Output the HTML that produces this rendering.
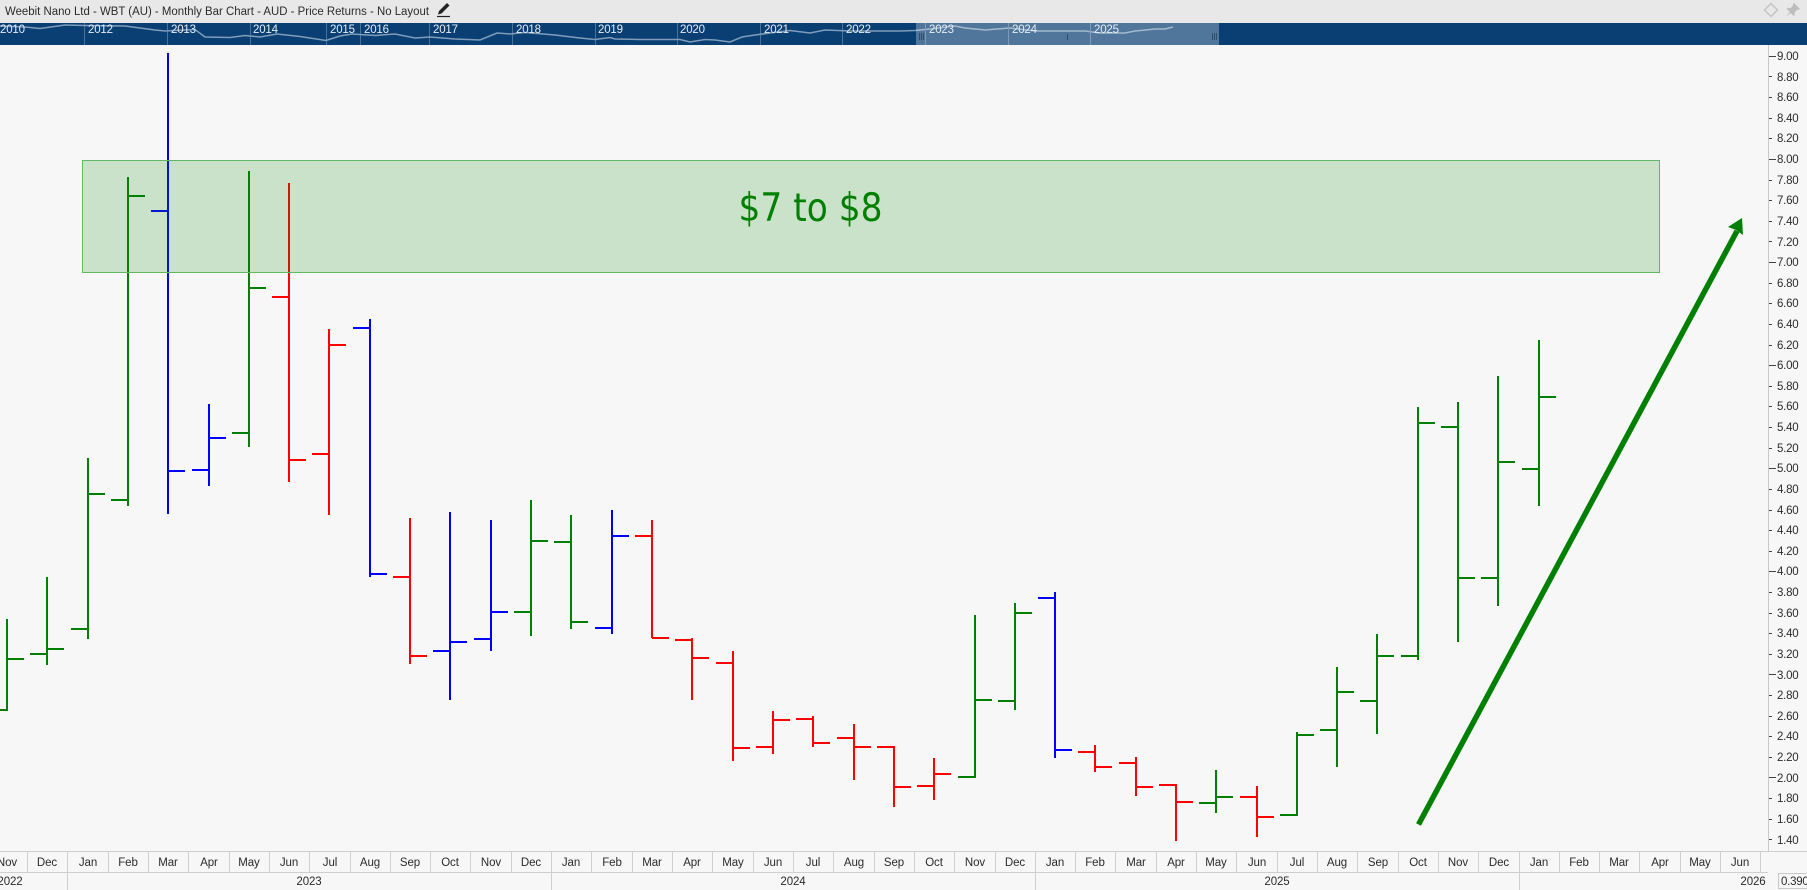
<!DOCTYPE html>
<html lang="en">
<head>
<meta charset="utf-8">
<title>Weebit Nano Ltd - WBT (AU) - Monthly Bar Chart</title>
<style>
html,body{margin:0;padding:0;width:1807px;height:890px;overflow:hidden;background:#f7f7f7}
svg{display:block;position:absolute;left:0;top:0}
text{font-family:"Liberation Sans",sans-serif}
.t{font-size:11.5px;fill:#2b2b2b}
.m{font-size:11.5px;fill:#2b2b2b;text-anchor:middle;letter-spacing:-.1px}
.b{font-size:11.5px;fill:#e4ecf3;letter-spacing:-.2px}
.a{font-size:11.5px;fill:#2b2b2b;letter-spacing:-.25px}
</style>
</head>
<body>
<svg width="1807" height="890" viewBox="0 0 1807 890" xmlns="http://www.w3.org/2000/svg">
<rect x="0" y="0" width="1807" height="890" fill="#f7f7f7"/>
<!-- title bar -->
<rect x="0" y="0" width="1807" height="23" fill="#e8e8e8"/>
<text class="t" x="5" y="15" textLength="424" lengthAdjust="spacingAndGlyphs">Weebit Nano Ltd - WBT (AU) - Monthly Bar Chart - AUD - Price Returns - No Layout</text>
<!-- pencil -->
<path d="M438 14.500l1-3.500 8-8 2.500 2.500-8 8z" fill="#222"/>
<path d="M437 16.500h13" stroke="#222" stroke-width="1.200" fill="none"/>
<!-- diamond + pin -->
<path d="M1771 3.500l6.500 6.500-6.500 6.500-6.500-6.500z" fill="none" stroke="#c4c4c4" stroke-width="1.500"/>
<path d="M1794 3l6 6-1.500 1-1-.5-3 3 .5 2.500-1.200 1-3-3-4.500 3.500 3.500-4.500-3-3 1-1.200 2.500.5 3-3-.5-1z" fill="#bdbdbd"/>
<!-- navigator -->
<rect x="0" y="23" width="1807" height="22" fill="#0a3f73"/>
<g stroke="#4d7299" stroke-width="1" shape-rendering="crispEdges">
<path d="M84.500 23V45M167.500 23V45M250.500 23V45M326.500 23V45M360.500 23V45M429.500 23V45M512.500 23V45M595.500 23V45M677.500 23V45M760.500 23V45M842.500 23V45"/>
</g>
<polyline fill="none" stroke="#7f9dba" stroke-width="1.500" points="0,26 25,27 40,28.500 65,25 85,25.500 125,26 155,30 165,31 185,30 195,29.500 205,37 230,37.500 245,35.500 260,37 277,34 300,36.500 326,40.500 340,36 352,34 375,35.500 395,34 415,38 430,37 455,39 480,40 497,33 510,34 525,32.500 555,35 580,38 595,39.500 610,37.500 615,39 640,39.500 680,39.500 690,42 705,39.500 715,40 730,42 742,37 755,35 770,33 790,30.500 810,33 825,30 850,31 870,31 900,31 915,30.500 930,29 955,26 965,28 985,30 1010,28 1035,31 1050,31 1065,31 1085,31 1100,33 1125,33 1135,31 1155,29 1165,29 1173,27"/>
<text class="b" x="0" y="33">2010</text>
<text class="b" x="88" y="33">2012</text>
<text class="b" x="171" y="33">2013</text>
<text class="b" x="253" y="33">2014</text>
<text class="b" x="330" y="33">2015</text>
<text class="b" x="364" y="33">2016</text>
<text class="b" x="433" y="33">2017</text>
<text class="b" x="516" y="33">2018</text>
<text class="b" x="598" y="33">2019</text>
<text class="b" x="680" y="33">2020</text>
<text class="b" x="764" y="33">2021</text>
<text class="b" x="846" y="33">2022</text>
<rect x="916" y="23" width="303" height="22" fill="#ffffff" fill-opacity=".29"/>
<g stroke="#7e9ab6" stroke-width="1" shape-rendering="crispEdges"><path d="M925.500 23V45M1008.500 23V45M1090.500 23V45"/></g>
<text class="b" x="929" y="33">2023</text>
<text class="b" x="1012" y="33">2024</text>
<text class="b" x="1094" y="33">2025</text>
<g stroke="#2f4f6f" stroke-width="1" shape-rendering="crispEdges"><path d="M919.500 33V40M921.500 33V40M923.500 33V40M1212.500 33V40M1214.500 33V40M1216.500 33V40M1067.500 34V40"/></g>

<!-- bars -->
<g fill="none" stroke-width="2" shape-rendering="crispEdges">
<path stroke="#008000" d="
M7 619V711M-10 710H7M7 659H24
M47 577V665M30 654H47M47 649H64
M88 458V639M71 629H88M88 494H105
M128 177V506M111 500H128M128 196H145
M249 171V447M232 433H249M249 288H266
M531 500V636M514 612H531M531 541H548
M571 515V629M554 542H571M571 622H588
M975 615V778M958 777H975M975 700H992
M1015 603V710M998 701H1015M1015 613H1032
M1216 770V813M1199 803H1216M1216 797H1233
M1297 732V816M1280 815H1297M1297 735H1314
M1337 667V767M1320 730H1337M1337 692H1354
M1377 634V734M1360 701H1377M1377 656H1394
M1418 407V660M1401 656H1418M1418 423H1435
M1458 402V642M1441 427H1458M1458 578H1475
M1498 376V606M1481 578H1498M1498 462H1515
M1539 340V506M1522 469H1539M1539 397H1556"/>
<path stroke="#0000ff" d="
M168 53V514M151 211H168M168 471H185
M209 404V486M192 470H209M209 438H226
M370 319V577M353 328H370M370 574H387
M450 512V700M433 651H450M450 642H467
M491 520V651M474 639H491M491 612H508
M612 510V634M595 628H612M612 536H629
M1055 592V758M1038 598H1055M1055 750H1072"/>
<path stroke="#ff0000" d="
M289 183V482M272 297H289M289 460H306
M329 329V515M312 454H329M329 345H346
M410 518V664M393 577H410M410 656H427
M652 520V638M635 536H652M652 638H669
M692 638V700M675 640H692M692 658H709
M733 651V761M716 663H733M733 748H750
M773 711V754M756 747H773M773 720H790
M813 716V747M796 719H813M813 743H830
M854 724V780M837 738H854M854 747H871
M894 746V807M877 747H894M894 787H911
M934 758V800M917 786H934M934 774H951
M1095 745V772M1078 752H1095M1095 767H1112
M1136 757V796M1119 763H1136M1136 787H1153
M1176 784V841M1159 785H1176M1176 802H1193
M1257 786V837M1240 797H1257M1257 817H1274"/>
</g>

<!-- zone -->
<rect x="82.500" y="160.500" width="1577" height="112" fill="#008000" fill-opacity=".18" stroke="#62b862" stroke-width="1" shape-rendering="crispEdges"/>
<text x="810.500" y="221" text-anchor="middle" font-size="39" style="font-family:'DejaVu Sans','Liberation Sans',sans-serif" fill="#008000" textLength="144" lengthAdjust="spacingAndGlyphs">$7 to $8</text>

<!-- arrow -->
<path d="M1418.500 824.500L1737 231" stroke="#008000" stroke-width="5.500" fill="none"/>
<path d="M1742 218L1743 235L1736 230L1728 227z" fill="#008000"/>

<!-- price axis -->
<path d="M1768.500 45V852" stroke="#c8c8c8" stroke-width="1" shape-rendering="crispEdges"/>
<g stroke="#444" stroke-width="1" shape-rendering="crispEdges" fill="none">
<path d="M1769 56.500H1776M1769 159.500H1776M1769 262.500H1776M1769 365.500H1776M1769 468.500H1776M1769 571.500H1776M1769 674.500H1776M1769 777.500H1776"/>
<path d="M1769 76.500h3M1769 97.500h3M1769 118.500h3M1769 138.500h3M1769 180.500h3M1769 200.500h3M1769 221.500h3M1769 241.500h3M1769 283.500h3M1769 303.500h3M1769 324.500h3M1769 345.500h3M1769 386.500h3M1769 406.500h3M1769 427.500h3M1769 448.500h3M1769 489.500h3M1769 510.500h3M1769 530.500h3M1769 551.500h3M1769 592.500h3M1769 613.500h3M1769 633.500h3M1769 654.500h3M1769 695.500h3M1769 716.500h3M1769 736.500h3M1769 757.500h3M1769 798.500h3M1769 819.500h3M1769 839.500h3"/>
</g>
<g class="a">
<text class="a" x="1777" y="60">9.00</text>
<text class="a" x="1777" y="81">8.80</text>
<text class="a" x="1777" y="101">8.60</text>
<text class="a" x="1777" y="122">8.40</text>
<text class="a" x="1777" y="142">8.20</text>
<text class="a" x="1777" y="163">8.00</text>
<text class="a" x="1777" y="184">7.80</text>
<text class="a" x="1777" y="204">7.60</text>
<text class="a" x="1777" y="225">7.40</text>
<text class="a" x="1777" y="246">7.20</text>
<text class="a" x="1777" y="266">7.00</text>
<text class="a" x="1777" y="287">6.80</text>
<text class="a" x="1777" y="307">6.60</text>
<text class="a" x="1777" y="328">6.40</text>
<text class="a" x="1777" y="349">6.20</text>
<text class="a" x="1777" y="369">6.00</text>
<text class="a" x="1777" y="390">5.80</text>
<text class="a" x="1777" y="410">5.60</text>
<text class="a" x="1777" y="431">5.40</text>
<text class="a" x="1777" y="452">5.20</text>
<text class="a" x="1777" y="472">5.00</text>
<text class="a" x="1777" y="493">4.80</text>
<text class="a" x="1777" y="514">4.60</text>
<text class="a" x="1777" y="534">4.40</text>
<text class="a" x="1777" y="555">4.20</text>
<text class="a" x="1777" y="575">4.00</text>
<text class="a" x="1777" y="596">3.80</text>
<text class="a" x="1777" y="617">3.60</text>
<text class="a" x="1777" y="637">3.40</text>
<text class="a" x="1777" y="658">3.20</text>
<text class="a" x="1777" y="679">3.00</text>
<text class="a" x="1777" y="699">2.80</text>
<text class="a" x="1777" y="720">2.60</text>
<text class="a" x="1777" y="740">2.40</text>
<text class="a" x="1777" y="761">2.20</text>
<text class="a" x="1777" y="782">2.00</text>
<text class="a" x="1777" y="802">1.80</text>
<text class="a" x="1777" y="823">1.60</text>
<text class="a" x="1777" y="844">1.40</text>
</g>

<!-- time axis -->
<g stroke="#cfcfcf" stroke-width="1" shape-rendering="crispEdges" fill="none">
<path d="M0 851.500H1807M0 872.500H1768"/>
<path d="M27.500 852V872M67.500 852V890M108.500 852V872M148.500 852V872M188.500 852V872M229.500 852V872M269.500 852V872M309.500 852V872M350.500 852V872M390.500 852V872M430.500 852V872M470.500 852V872M511.500 852V872M551.500 852V890M591.500 852V872M632.500 852V872M672.500 852V872M712.500 852V872M753.500 852V872M793.500 852V872M833.500 852V872M874.500 852V872M914.500 852V872M954.500 852V872M995.500 852V872M1035.500 852V890M1075.500 852V872M1115.500 852V872M1156.500 852V872M1196.500 852V872M1236.500 852V872M1277.500 852V872M1317.500 852V872M1357.500 852V872M1398.500 852V872M1438.500 852V872M1478.500 852V872M1519.500 852V890M1559.500 852V872M1599.500 852V872M1639.500 852V872M1680.500 852V872M1720.500 852V872M1760.500 852V872"/>
</g>
<text class="m" x="7" y="866">Nov</text><text class="m" x="47" y="866">Dec</text><text class="m" x="88" y="866">Jan</text><text class="m" x="128" y="866">Feb</text><text class="m" x="168" y="866">Mar</text><text class="m" x="209" y="866">Apr</text><text class="m" x="249" y="866">May</text><text class="m" x="289" y="866">Jun</text><text class="m" x="330" y="866">Jul</text><text class="m" x="370" y="866">Aug</text><text class="m" x="410" y="866">Sep</text><text class="m" x="450" y="866">Oct</text><text class="m" x="491" y="866">Nov</text><text class="m" x="531" y="866">Dec</text><text class="m" x="571" y="866">Jan</text><text class="m" x="612" y="866">Feb</text><text class="m" x="652" y="866">Mar</text><text class="m" x="692" y="866">Apr</text><text class="m" x="733" y="866">May</text><text class="m" x="773" y="866">Jun</text><text class="m" x="813" y="866">Jul</text><text class="m" x="854" y="866">Aug</text><text class="m" x="894" y="866">Sep</text><text class="m" x="934" y="866">Oct</text><text class="m" x="975" y="866">Nov</text><text class="m" x="1015" y="866">Dec</text><text class="m" x="1055" y="866">Jan</text><text class="m" x="1095" y="866">Feb</text><text class="m" x="1136" y="866">Mar</text><text class="m" x="1176" y="866">Apr</text><text class="m" x="1216" y="866">May</text><text class="m" x="1257" y="866">Jun</text><text class="m" x="1297" y="866">Jul</text><text class="m" x="1337" y="866">Aug</text><text class="m" x="1378" y="866">Sep</text><text class="m" x="1418" y="866">Oct</text><text class="m" x="1458" y="866">Nov</text><text class="m" x="1499" y="866">Dec</text><text class="m" x="1539" y="866">Jan</text><text class="m" x="1579" y="866">Feb</text><text class="m" x="1619" y="866">Mar</text><text class="m" x="1660" y="866">Apr</text><text class="m" x="1700" y="866">May</text><text class="m" x="1740" y="866">Jun</text>
<text class="m" x="10" y="885">2022</text>
<text class="m" x="309" y="885">2023</text>
<text class="m" x="793" y="885">2024</text>
<text class="m" x="1277" y="885">2025</text>
<text class="m" x="1753" y="885">2026</text>
<!-- corner box -->
<rect x="1778.500" y="873.500" width="40" height="15" fill="#f7f7f7" stroke="#c8c8c8" stroke-width="1" shape-rendering="crispEdges"/>
<text class="a" x="1781" y="885">0.390</text>
</svg>
</body>
</html>
